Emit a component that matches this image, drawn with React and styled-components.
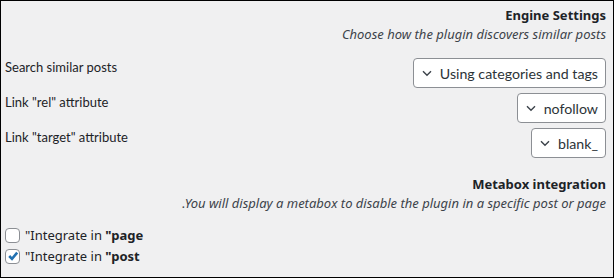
import React from 'react';
import styled, { createGlobalStyle } from 'styled-components';

const GlobalStyle = createGlobalStyle`
    html, body {
        margin: 0;
        padding: 0;
        background: #f0f0f1;
    }
    body {
        font-family: "Noto Sans", "Open Sans", sans-serif;
        font-size: 13px;
        color: #1d2327;
    }
`

const Panel = styled.div`
    width: 614px;
    height: 278px;
    box-sizing: border-box;
    border: 1px solid #000;
    background: #f0f0f1;
    padding: 5px 7px 0 4px;
    display: flex;
    flex-direction: column;
`

const Heading = styled.div`
    text-align: right;
    margin-top: ${p => p.$top || 0}px;
`

const Title = styled.div`
    font-weight: bold;
    font-size: 13px;
    line-height: 19px;
    color: #1d2327;
`

const Subtitle = styled.div`
    font-style: italic;
    font-size: 13px;
    line-height: 19px;
    color: #3c434a;
`

const Rows = styled.div`
    display: flex;
    flex-direction: column;
    gap: 5px;
    margin-top: 14px;
`

const Row = styled.div`
    display: flex;
    justify-content: space-between;
    align-items: flex-start;
    height: 30px;
`

const Label = styled.div`
    font-family: Lato, "Noto Sans", sans-serif;
    font-size: 13px;
    line-height: 19px;
`

const Select = styled.div`
    height: 30px;
    box-sizing: border-box;
    border: 1px solid #8c8f94;
    border-radius: 4px;
    background: #fff;
    display: flex;
    align-items: center;
    gap: 8px;
    padding: 0 7px 0 8px;
    font-family: Lato, "Noto Sans", sans-serif;
    font-size: 14.2px;
    color: #2c3338;
`

const Chevron = () => (
    <svg width="10" height="7" viewBox="0 0 10 7">
        <path d="M1 1.2 L5 5.2 L9 1.2" fill="none" stroke="#3c434a" strokeWidth="1.4" />
    </svg>
)

const Checks = styled.div`
    display: flex;
    flex-direction: column;
    gap: 5px;
    margin-top: 14px;
`

const CheckRow = styled.label`
    display: flex;
    align-items: center;
    gap: 5px;
    height: 16px;
    font-size: 13px;
`

const Box = styled.span`
    width: 15px;
    height: 15px;
    box-sizing: border-box;
    border: 1px solid #8c8f94;
    border-radius: 4px;
    background: #fff;
    display: flex;
    align-items: center;
    justify-content: center;
`

const Strong = styled.b`
    font-weight: bold;
`

const Tick = () => (
    <svg width="12" height="12" viewBox="0 0 12 12">
        <path d="M2.2 6 L5 8.9 L10.2 2.6" fill="none" stroke="#2271b1" strokeWidth="2.6" />
    </svg>
)

const Check = ({ checked, type }) => (
    <CheckRow>
        <Box>{checked && <Tick />}</Box>
        <span>"Integrate in <Strong>"{type}</Strong></span>
    </CheckRow>
)

const App = () => {
    const rows = [
        ['Search similar posts', 'Using categories and tags'],
        ['Link "rel" attribute', 'nofollow'],
        ['Link "target" attribute', 'blank_'],
    ];

    return (
        <Panel>
            <GlobalStyle />
            <Heading>
                <Title>Engine Settings</Title>
                <Subtitle>Choose how the plugin discovers similar posts</Subtitle>
            </Heading>
            <Rows>
                {rows.map(([label, value]) => (
                    <Row key={label}>
                        <Label>{label}</Label>
                        <Select><Chevron />{value}</Select>
                    </Row>
                ))}
            </Rows>
            <Heading $top={17}>
                <Title>Metabox integration</Title>
                <Subtitle>.You will display a metabox to disable the plugin in a specific post or page</Subtitle>
            </Heading>
            <Checks>
                <Check type="page" />
                <Check type="post" checked />
            </Checks>
        </Panel>
    )
}

export default App;
